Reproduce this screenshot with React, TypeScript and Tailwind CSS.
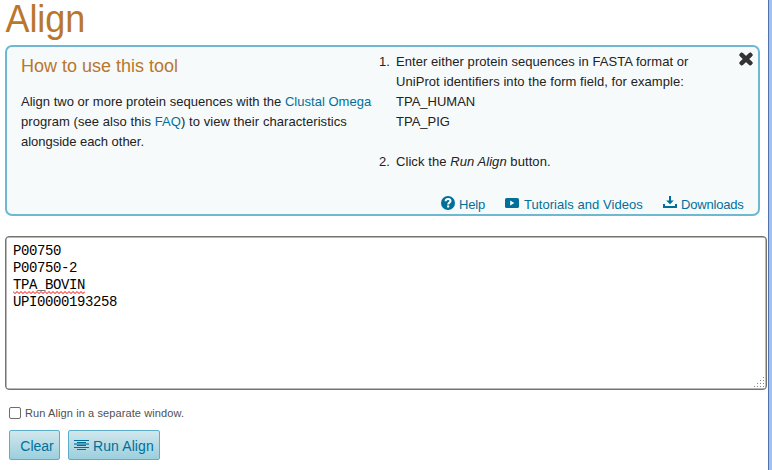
import React from "react";

const SANS = "font-['Liberation_Sans',Arial,sans-serif]";

function HelpIcon() {
  return (
    <svg width="14" height="14" viewBox="0 0 14 14" className="block">
      <circle cx="7" cy="7" r="7" fill="#00709b" />
      <path d="M4.6 5.2C4.7 3.7 5.7 2.9 7.1 2.9c1.4 0 2.4.8 2.4 2 0 1.7-2.3 1.7-2.3 3.5" fill="none" stroke="#fff" strokeWidth="2" />
      <rect x="6.1" y="9.4" width="2.1" height="2.1" fill="#fff" />
    </svg>
  );
}

function VideoIcon() {
  return (
    <svg width="14" height="10" viewBox="0 0 14 10" className="block">
      <rect width="14" height="10" rx="1.6" fill="#00709b" />
      <path d="M5.2 2.6v4.8L9.4 5z" fill="#fff" />
    </svg>
  );
}

function DownloadIcon() {
  return (
    <svg width="14" height="12" viewBox="0 0 14 12" className="block" fill="#00709b">
      <path d="M6 0h2v4.4h2.8L7 8.2 3.2 4.4H6z" />
      <path d="M0 8h2v2h10V8h2v4H0z" />
    </svg>
  );
}

function CloseIcon() {
  return (
    <svg width="14" height="14" viewBox="0 0 14 14" className="block">
      <path d="M2.7 2.9l8.6 8.2M11.3 2.9l-8.6 8.2" stroke="#333" strokeWidth="4.4" strokeLinecap="round" />
      <path d="M2.7 2.9l8.6 8.2M11.3 2.9l-8.6 8.2" stroke="#333" strokeWidth="3.4" strokeLinecap="square" />
    </svg>
  );
}

function AlignIcon() {
  return (
    <svg width="16" height="10" viewBox="0 0 16 10" className="block" fill="#00709b">
      <rect x="0" y="0" width="15" height="1" />
      <rect x="3" y="2" width="9" height="1" />
      <rect x="0" y="3" width="15" height="1" opacity="0.55" />
      <rect x="0" y="4" width="15" height="1" opacity="0.6" />
      <rect x="3" y="5" width="9" height="1" />
      <rect x="0" y="7" width="15" height="1" />
      <rect x="3" y="9" width="9" height="1" />
    </svg>
  );
}

function ResizeGrip() {
  const dots = [[9, 0], [6, 3], [9, 3], [3, 6], [6, 6], [9, 6], [0, 9], [3, 9], [6, 9], [9, 9]];
  return (
    <svg width="10" height="10" className="block" fill="#888" shapeRendering="crispEdges">
      {dots.map(([x, y]) => <rect key={x + "-" + y} x={x} y={y} width="1" height="1" />)}
    </svg>
  );
}

function Squiggle({ width }: { width: number }) {
  const points = Array.from({ length: Math.floor(width / 2) + 1 }, (_, i) => `${i * 2},${i % 2 ? 2.6 : 0.5}`).join(" ");
  return (
    <svg width={width} height="4" className="absolute left-0 top-[14px]">
      <polyline points={points} fill="none" stroke="#f00" strokeWidth="1" />
    </svg>
  );
}

export default function App() {
  return (
    <div className={`flex h-[470px] w-[772px] overflow-hidden bg-white text-[13px] leading-5 text-[#222] ${SANS}`}>
      <main className="flex w-[768px] shrink-0 flex-col pl-[5px]">
        <h1 className="h-[45px] pl-[0.5px] text-[36px] leading-[40px] text-[#b9772b]">
          <span className="inline-block origin-[0_33px] scale-y-[1.1] tracking-[-0.1px]">Align</span>
        </h1>

        <section className="flex h-[171px] w-[755px] flex-col rounded-[7px] border-2 border-[#6fb8d2] bg-[#f6fafb]">
          <div className="flex h-[147px]">
            <div className="w-[369px] pl-[14px]">
              <h2 className="mt-[9px] text-[18px] leading-5 text-[#b9772b]">How to use this tool</h2>
              <p className="mt-[16px] whitespace-nowrap">
                <span className="tracking-[0.02px]">Align two or more protein sequences with the <a className="text-[#00709b]">Clustal Omega</a></span><br />
                <span className="tracking-[0.065px]">program (see also this <a className="text-[#00709b]">FAQ</a>) to view their characteristics</span><br />
                <span className="tracking-[-0.03px]">alongside each other.</span>
              </p>
            </div>
            <ol className="flex-1 list-none whitespace-nowrap pt-[5px]">
              <li className="flex">
                <span className="w-[20px] shrink-0 pl-[3px]">1.</span>
                <span><span className="tracking-[0.06px]">Enter either protein sequences in FASTA format or<br />UniProt identifiers into the form field, for example:</span><br />TPA_HUMAN<br />TPA_PIG</span>
              </li>
              <li className="mt-5 flex">
                <span className="w-[20px] shrink-0 pl-[3px]">2.</span>
                <span className="tracking-[0.07px]">Click the <em>Run Align</em> button.</span>
              </li>
            </ol>
            <button className="mr-[5px] mt-[5px] h-[14px]"><CloseIcon /></button>
          </div>
          <nav className="flex h-5 whitespace-nowrap pl-[434px] text-[#00709b]">
            <a className="flex w-[64px]"><span className="w-[18px] pt-[2px]"><HelpIcon /></span><span className="pt-[1px] tracking-[-0.15px]">Help</span></a>
            <a className="flex w-[158px]"><span className="w-[19px] pt-[4px]"><VideoIcon /></span><span className="pt-[1px] tracking-[0.05px]">Tutorials and Videos</span></a>
            <a className="flex"><span className="w-[18px] pt-[2px]"><DownloadIcon /></span><span className="pt-[1px] tracking-[-0.18px]">Downloads</span></a>
          </nav>
        </section>

        <div className="relative mt-[20px] h-[154px] w-[762px] rounded-[4px] border border-[#77736f] bg-white px-[7px] pt-[6px] font-['Liberation_Mono','Courier_New',monospace] text-[14px] leading-[17px] tracking-[-0.4px] text-black shadow-[inset_0_0_0_0.5px_#77736f]">
          <div>P00750</div>
          <div>P00750-2</div>
          <div className="relative">TPA_BOVIN<Squiggle width={72} /></div>
          <div>UPI0000193258</div>
          <div className="absolute bottom-[2px] right-[2px]"><ResizeGrip /></div>
        </div>

        <label className="mt-[13px] flex h-[20px] items-center pl-[4px] text-[11px] tracking-[0.1px] text-[#505050]">
          <span className="mr-[4px] h-[12px] w-[12px] rounded-[2px] border border-[#706c68] bg-white" />
          Run Align in a separate window.
        </label>

        <div className="mt-[7px] flex gap-[8px] pl-[4px] text-[14px] text-[#00709b]">
          <button className="h-[30px] w-[51px] rounded-[2px] border border-[#5caec8] bg-linear-to-b from-[#d0e7ed] to-[#9ccfdd] pl-[5px] pt-[2px]">Clear</button>
          <button className="flex h-[30px] w-[92px] items-center whitespace-nowrap rounded-[2px] border border-[#5caec8] bg-linear-to-b from-[#d0e7ed] to-[#9ccfdd] pl-[5px]">
            <AlignIcon /><span className="ml-[3px] pt-[2px] tracking-[0.1px]">Run Align</span>
          </button>
        </div>
      </main>
      <aside className="h-full w-[4px] shrink-0 border-l border-[#4f73ad] bg-[#a4c1ec]" />
    </div>
  );
}
